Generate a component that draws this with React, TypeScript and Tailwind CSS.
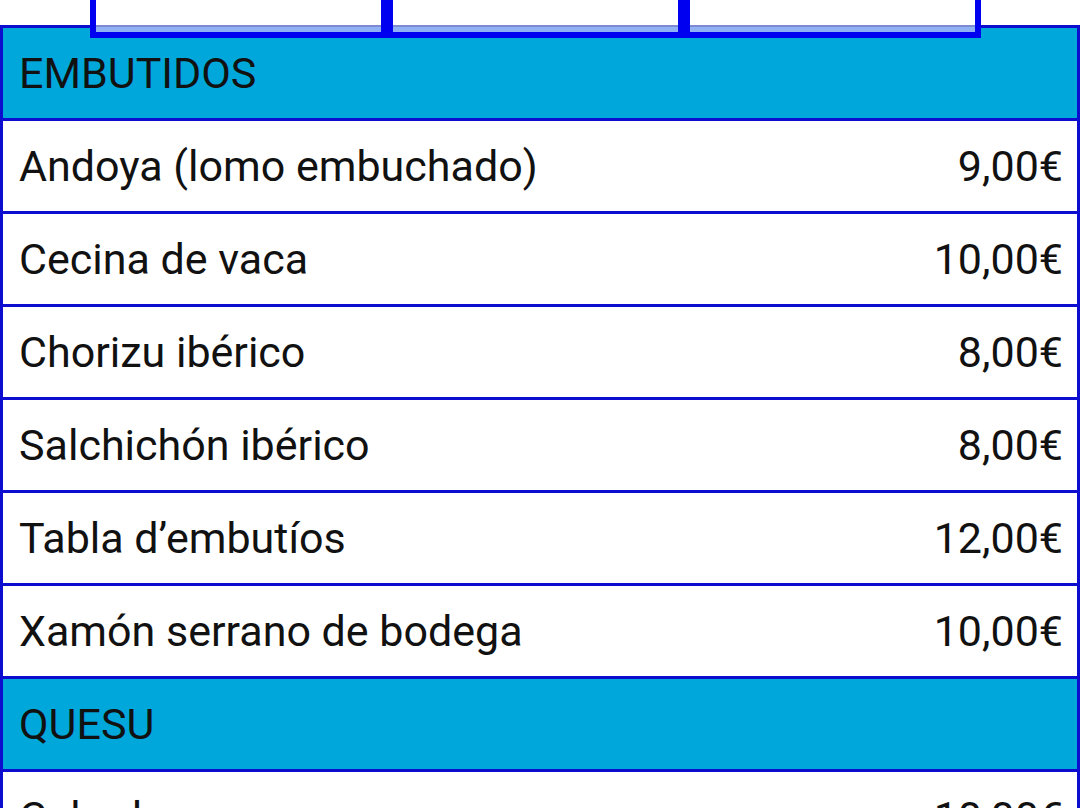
const embutidos = [
  { name: "Andoya (lomo embuchado)", price: "9,00€" },
  { name: "Cecina de vaca", price: "10,00€" },
  { name: "Chorizu ibérico", price: "8,00€" },
  { name: "Salchichón ibérico", price: "8,00€" },
  { name: "Tabla d’embutíos", price: "12,00€" },
  { name: "Xamón serrano de bodega", price: "10,00€" },
];

const quesu = [
  { name: "Cabrales", price: "10,00€" },
  { name: "Afuega'l pitu", price: "9,00€" },
];

const Box = () => (
  <div className="w-[297px] h-[38px] bg-white border-x-[6px] border-b-[6px] border-[#0000f0] flex flex-col justify-end">
    <div className="h-[2px] bg-[#7d8ad6]" />
    <div className="h-[5px] bg-[#90b2f4]" />
  </div>
);

const Section = ({ title }: { title: string }) => (
  <div className="h-[93px] flex items-center px-4 bg-[#00a7db] border-b-[3px] border-[#0d0dd0]">
    {title}
  </div>
);

const Row = ({ name, price }: { name: string; price: string }) => (
  <div className="h-[93px] flex items-center justify-between pl-4 pr-[14px] bg-white border-b-[3px] border-[#0d0dd0]">
    <span>{name}</span>
    <span>{price}</span>
  </div>
);

export default function App() {
  return (
    <div className="w-[1080px] h-[808px] overflow-hidden bg-white text-[#111] font-['Roboto',sans-serif] text-[43px]">
      <div className="relative z-10 flex pl-[90px]">
        <Box />
        <Box />
        <Box />
      </div>
      <div className="-mt-[13px] border-x-[3px] border-t-[3px] border-[#0d0dd0]">
        <Section title="EMBUTIDOS" />
        {embutidos.map((item) => (
          <Row key={item.name} {...item} />
        ))}
        <Section title="QUESU" />
        {quesu.map((item) => (
          <Row key={item.name} {...item} />
        ))}
      </div>
    </div>
  );
}
